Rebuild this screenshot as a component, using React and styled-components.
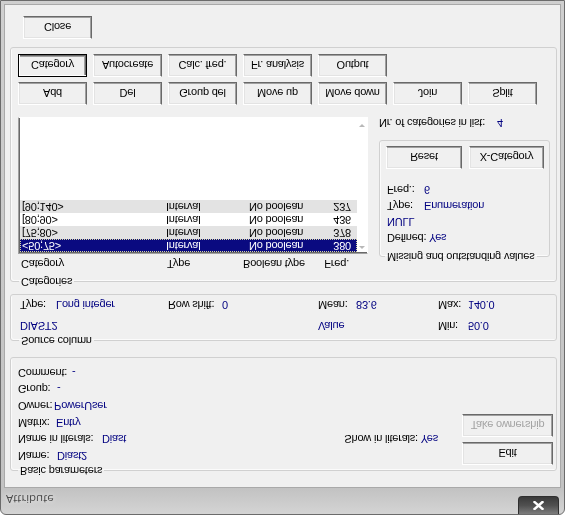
import styled, { createGlobalStyle } from "styled-components"

const GlobalStyle = createGlobalStyle`
  html, body { margin: 0; padding: 0; background: #ffffff; }
  body {
    font-family: "Liberation Sans", Arial, sans-serif;
    font-size: 11px;
    letter-spacing: -0.2px;
    color: #000;
  }
`

// the whole dialog is shown upside down in the reference
const Screen = styled.div`
  width: 568px;
  height: 515px;
  overflow: hidden;
  transform: scaleY(-1);
`

const Window = styled.div`
  box-sizing: border-box;
  width: 565px;
  height: 515px;
  border: 1px solid #6b6b6b;
  border-radius: 6px 6px 0 0;
  background: linear-gradient(#d4d4d4, #c2c2c2 26px, #cfcfcf);
  display: flex;
  flex-direction: column;
  padding: 0 3px 3px;
`

const TitleBar = styled.div`
  height: 26px;
  flex: none;
  display: flex;
  align-items: flex-start;
  justify-content: space-between;
  padding-left: 2px;
`

const Title = styled.span`
  font-family: "Open Sans", "Noto Sans", sans-serif;
  font-size: 11.5px;
  letter-spacing: 0;
  color: #4a4a4a;
  line-height: 30px;
  text-shadow: 0 0 5px #f4f4f4;
`

const CloseX = styled.div`
  box-sizing: border-box;
  width: 41px;
  height: 18px;
  margin-right: 2px;
  border: 1px solid #2f2f2f;
  border-top: none;
  border-radius: 0 0 4px 4px;
  background: linear-gradient(#7c7c7c, #505050 50%, #3a3a3a);
  display: flex;
  align-items: center;
  justify-content: center;
`

const Client = styled.div`
  flex: 1;
  background: #f0f0f0;
  border: 1px solid #a9a9a9;
  padding: 10px 0 0 5px;
  display: flex;
  flex-direction: column;
`

const Group = styled.fieldset`
  box-sizing: border-box;
  width: ${p => p.$w || 547}px;
  height: ${p => p.$h}px;
  margin: ${p => p.$m || "0"};
  padding: ${p => p.$pad || "0 7px"};
  border: 1px solid #d0d0d0;
  border-radius: 3px;
  box-shadow: inset 1px 1px #fbfbfb;
  min-width: 0;
  flex: none;
`

const Legend = styled.legend`
  padding: 0 2px;
  margin-left: ${p => p.$ml || 0}px;
  line-height: 13px;
`

const Row = styled.div`
  display: flex;
  align-items: flex-start;
  justify-content: ${p => p.$justify || "flex-start"};
`

const FieldList = styled.div`
  display: flex;
  flex-direction: column;
`

const Field = styled.div`
  display: flex;
  align-items: center;
  height: ${p => p.$h || 16.6}px;
  white-space: nowrap;
`

const Label = styled.span`
  flex: none;
  width: ${p => p.$w}px;
`

const Value = styled.span`
  color: #000080;
`

const Button = styled.button`
  box-sizing: border-box;
  flex: none;
  width: ${p => p.$w || 69}px;
  height: 23px;
  padding: 0;
  font: inherit;
  letter-spacing: inherit;
  color: ${p => (p.disabled ? "#a3a3a3" : "#000")};
  background: #f0f0f0;
  border: 1px solid;
  border-color: ${p => (p.$default ? "#000" : "#fff #696969 #696969 #fff")};
  box-shadow: ${p =>
    p.$default
      ? "inset 1px 1px #fff, inset -1px -1px #696969, inset -2px -2px #a0a0a0"
      : "inset -1px -1px #a0a0a0, inset 1px 1px #e3e3e3"};
`

const ButtonCol = styled.div`
  display: flex;
  flex-direction: column;
  gap: 5px;
  margin-top: -1px;
`

const ButtonRow = styled.div`
  display: flex;
  gap: ${p => p.$gap || 6}px;
  margin: ${p => p.$m || "0"};
`

const ShowIn = styled.div`
  line-height: 13px;
  margin: 18.5px 24px 0 0;
  white-space: nowrap;
`

const SourceGrid = styled.div`
  display: grid;
  grid-template-columns: 148px 150px 120px 1fr;
  grid-auto-rows: 13px;
  row-gap: 8px;
  padding-top: 2px;
  line-height: 13px;
  white-space: nowrap;
`

const Cell = styled.div`
  display: flex;
`

const CatBody = styled.div`
  display: flex;
  flex-direction: column;
  padding-top: 5px;
`

const LeftCol = styled.div`
  width: 350px;
  flex: none;
  display: flex;
  flex-direction: column;
`

const RightCol = styled.div`
  margin-left: 11px;
  display: flex;
  flex-direction: column;
`

const Headers = styled.div`
  display: grid;
  grid-template-columns: 146px 76px 1fr auto;
  line-height: 13px;
  padding: 0 19px 0 3px;
  margin-bottom: 3px;
  white-space: nowrap;
`

const Right = styled.span`
  text-align: right;
`

const ListBox = styled.div`
  box-sizing: border-box;
  height: 137px;
  background: #fff;
  border: 1px solid;
  border-color: #a0a0a0 #fff #fff #a0a0a0;
  box-shadow: inset 1px 1px #696969;
  padding: 1px 0 0 1px;
  display: flex;
`

const Rows = styled.div`
  flex: 1;
  display: flex;
  flex-direction: column;
`

const ListRow = styled.div`
  box-sizing: border-box;
  height: 13px;
  display: grid;
  grid-template-columns: 144px 83px 1fr auto;
  padding: 0 6px 0 2px;
  line-height: 12px;
  white-space: nowrap;
  background: ${p => (p.$sel ? "#0a0a80" : p.$alt ? "#e3e3e3" : "#fff")};
  color: ${p => (p.$sel ? "#fff" : "#000")};
  outline: ${p => (p.$sel ? "1px dotted #d8d8a0" : "none")};
  outline-offset: -1px;
`

const ScrollBar = styled.div`
  width: 10px;
  display: flex;
  flex-direction: column;
  justify-content: space-between;
  align-items: center;
  padding: 3px 0 6px;
`

const Arrow = styled.span`
  width: 0;
  height: 0;
  border-left: 3px solid transparent;
  border-right: 3px solid transparent;
  ${p =>
    p.$down
      ? "border-top: 3px solid #b8b8b8;"
      : "border-bottom: 3px solid #b8b8b8;"}
`

const NrText = styled.div`
  display: flex;
  line-height: 13px;
  margin-top: 11px;
  white-space: nowrap;
`

const MissingList = styled.div`
  display: flex;
  flex-direction: column;
  padding-top: 4px;
  line-height: 13px;
`

const CloseRow = styled.div`
  margin: 8px 0 0 13px;
`

const categories = [
  { name: "<50;75>", type: "Interval", bool: "No boolean", freq: 380 },
  { name: "[75;80>", type: "Interval", bool: "No boolean", freq: 378 },
  { name: "[80;90>", type: "Interval", bool: "No boolean", freq: 436 },
  { name: "[90;140>", type: "Interval", bool: "No boolean", freq: 237 },
]

const basicFields = [
  ["Name:", 39, "Diast2"],
  ["Name in literals:", 84, "Diast"],
  ["Matrix:", 38, "Entry"],
  ["Owner:", 36, "PowerUser"],
  ["Group:", 39, "-"],
  ["Comment:", 54, "-"],
]

const missing = [
  ["Defined:", 42, "Yes"],
  ["", 0, "NULL"],
  ["Type:", 37, "Enumeration"],
  ["Freq.:", 37, "6"],
]

export default function App() {
  return (
    <>
      <GlobalStyle />
      <Screen>
        <Window>
          <TitleBar>
            <Title>Attribute</Title>
            <CloseX>
              <svg width="11" height="9" viewBox="0 0 11 9">
                <path d="M1.5 1 L9.5 8 M9.5 1 L1.5 8" stroke="#fff" strokeWidth="2.4" strokeLinecap="square" />
              </svg>
            </CloseX>
          </TitleBar>
          <Client>
            <Group $h={120} $pad="0 3px 0 7px">
              <Legend>Basic parameters</Legend>
              <Row $justify="space-between">
                <FieldList>
                  {basicFields.map(([l, w, v]) => (
                    <Field key={l}>
                      <Label $w={w}>{l}</Label>
                      <Value>{v}</Value>
                    </Field>
                  ))}
                </FieldList>
                <Row>
                  <ShowIn>
                    Show in literals: <Value>Yes</Value>
                  </ShowIn>
                  <ButtonCol>
                    <Button $w={91}>Edit</Button>
                    <Button $w={91} disabled>Take ownership</Button>
                  </ButtonCol>
                </Row>
              </Row>
            </Group>

            <Group $h={53} $m="10px 0 0" $pad="0 9px">
              <Legend $ml={-1}>Source column</Legend>
              <SourceGrid>
                <Cell><Value>DIAST2</Value></Cell>
                <Cell />
                <Cell><Value>Value</Value></Cell>
                <Cell><Label $w={30}>Min:</Label><Value>50.0</Value></Cell>
                <Cell><Label $w={36}>Type:</Label><Value>Long integer</Value></Cell>
                <Cell><Label $w={54}>Row shift:</Label><Value>0</Value></Cell>
                <Cell><Label $w={38}>Mean:</Label><Value>83.6</Value></Cell>
                <Cell><Label $w={30}>Max:</Label><Value>140.0</Value></Cell>
              </SourceGrid>
            </Group>

            <Group $h={241} $m="6px 0 0" $pad="0 6px 0 7px">
              <Legend $ml={1}>Categories</Legend>
              <CatBody>
                <Row>
                  <LeftCol>
                    <Headers>
                      <span>Category</span>
                      <span>Type</span>
                      <span>Boolean type</span>
                      <Right>Freq.</Right>
                    </Headers>
                    <ListBox>
                      <Rows>
                        {categories.map((c, i) => (
                          <ListRow key={c.name} $sel={i === 0} $alt={i % 2 === 1}>
                            <span>{c.name}</span>
                            <span>{c.type}</span>
                            <span>{c.bool}</span>
                            <Right>{c.freq}</Right>
                          </ListRow>
                        ))}
                      </Rows>
                      <ScrollBar>
                        <Arrow />
                        <Arrow $down />
                      </ScrollBar>
                    </ListBox>
                  </LeftCol>
                  <RightCol>
                    <Group $w={171} $h={123} $m="7px 0 0" $pad="0 6px 0 7px">
                      <Legend $ml={-2}>Missing and outstanding values</Legend>
                      <MissingList>
                        {missing.map(([l, w, v]) => (
                          <Field key={v} $h={16}>
                            {l && <Label $w={w}>{l}</Label>}
                            <Value>{v}</Value>
                          </Field>
                        ))}
                      </MissingList>
                      <ButtonRow $m="13px 0 0 -1px" $gap={7}>
                        <Button $w={76}>Reset</Button>
                        <Button $w={75}>X-Category</Button>
                      </ButtonRow>
                    </Group>
                    <NrText>
                      <Label $w={118}>Nr. of categories in list:</Label>
                      <Value>4</Value>
                    </NrText>
                  </RightCol>
                </Row>
                <ButtonRow $m="11px 0 0">
                  <Button>Add</Button>
                  <Button>Del</Button>
                  <Button>Group del</Button>
                  <Button>Move up</Button>
                  <Button>Move down</Button>
                  <Button>Join</Button>
                  <Button>Split</Button>
                </ButtonRow>
                <ButtonRow $m="5px 0 0">
                  <Button $default>Category</Button>
                  <Button>Autocreate</Button>
                  <Button>Calc. freq.</Button>
                  <Button>Fr. analysis</Button>
                  <Button>Output</Button>
                </ButtonRow>
              </CatBody>
            </Group>

            <CloseRow>
              <Button>Close</Button>
            </CloseRow>
          </Client>
        </Window>
      </Screen>
    </>
  )
}
